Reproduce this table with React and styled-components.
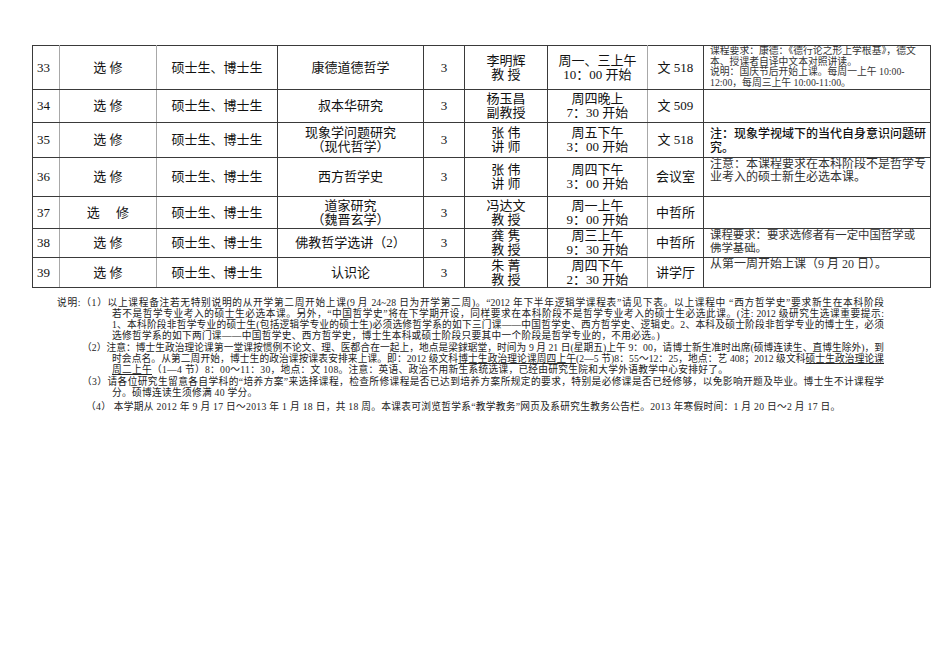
import { createGlobalStyle, styled } from 'styled-components';

const Global = createGlobalStyle`
  html, body {
    margin: 0;
    padding: 0;
    background: #fff;
  }
  body {
    font-family: "Liberation Serif", "Noto Sans CJK SC", serif;
    color: #111;
  }
`;

const Page = styled.div`
  width: 950px;
  height: 672px;
  padding: 45px 20px 0 32px;
  box-sizing: border-box;
`;

const Table = styled.table`
  width: 898px;
  border-collapse: collapse;
  table-layout: fixed;
`;

const Row = styled.tr`
  height: ${(p) => p.$h}px;
`;

const Cell = styled.td`
  border: 1px solid #3a3a3a;
  border-right-color: ${(p) => (p.$light ? '#a8a8a8' : '#3a3a3a')};
  padding: 0 2px;
  font-size: 13px;
  line-height: 14px;
  text-align: center;
  vertical-align: middle;
  white-space: nowrap;
`;

const NoCell = styled(Cell)`
  text-align: left;
  padding-left: 4px;
`;

const Remark = styled.td`
  border: 1px solid #3a3a3a;
  padding: 0 4px 0 6px;
  vertical-align: top;
  text-align: left;
  font-size: ${(p) => p.$size || 12}px;
  line-height: ${(p) => p.$lh || 14}px;
  font-weight: ${(p) => (p.$bold ? 500 : 400)};
  font-family: ${(p) =>
    p.$sans
      ? '"Noto Sans CJK SC", "Liberation Sans", sans-serif'
      : '"Liberation Serif", "Noto Sans CJK SC", serif'};
  color: ${(p) => (p.$sans ? '#111' : '#333')};
`;

const Notes = styled.div`
  margin-top: 9px;
  font-size: 9.7px;
  line-height: 11px;
  color: #222;
`;

const Para = styled.div`
  margin-bottom: ${(p) => p.$gap || 1}px;
`;

const Line = styled.div`
  box-sizing: border-box;
  width: 852px;
  padding-left: ${(p) => p.$indent}px;
  text-align: ${(p) => (p.$full ? 'justify' : 'left')};
  text-align-last: ${(p) => (p.$full ? 'justify' : 'left')};
  white-space: ${(p) => (p.$full ? 'normal' : 'nowrap')};
  letter-spacing: ${(p) => (p.$full ? 0 : 0.3)}px;
`;

const U = styled.span`
  text-decoration: underline;
`;

const rows = [
  {
    no: '33', kind: '选 修', course: ['康德道德哲学'], teacher: ['李明辉', '教 授'],
    time: ['周一、三上午', '10：00 开始'], room: '文 518', h: 44,
    remark: (
      <Remark $size={9.8} $lh={10.5}>
        课程要求：康德：《德行论之形上学根基》，德文本、授课者自译中文本对照讲读。
        <br />
        说明：国庆节后开始上课。每周一上午 10:00-12:00，每周三上午 10:00-11:00。
      </Remark>
    ),
  },
  {
    no: '34', kind: '选 修', course: ['叔本华研究'], teacher: ['杨玉昌', '副教授'],
    time: ['周四晚上', '7：30 开始'], room: '文 509', h: 33,
    remark: <Remark />,
  },
  {
    no: '35', kind: '选 修', course: ['现象学问题研究', '（现代哲学）'], teacher: ['张 伟', '讲 师'],
    time: ['周五下午', '3：00 开始'], room: '文 518', h: 35,
    remark: (
      <Remark $sans $bold $size={12} $lh={14} style={{ paddingTop: 3 }}>
        注：现象学视域下的当代自身意识问题研究。
      </Remark>
    ),
  },
  {
    no: '36', kind: '选 修', course: ['西方哲学史'], teacher: ['张 伟', '讲 师'],
    time: ['周四下午', '3：00 开始'], room: '会议室', h: 39,
    remark: (
      <Remark $size={12} $lh={13}>
        注意：本课程要求在本科阶段不是哲学专业考入的硕士新生必选本课。
      </Remark>
    ),
  },
  {
    no: '37', kind: '选　 修', course: ['道家研究', '（魏晋玄学）'], teacher: ['冯达文', '教 授'],
    time: ['周一上午', '9：00 开始'], room: '中哲所', h: 32,
    remark: <Remark />,
  },
  {
    no: '38', kind: '选 修', course: ['佛教哲学选讲（2）'], teacher: ['龚 隽', '教 授'],
    time: ['周三上午', '9：30 开始'], room: '中哲所', h: 29,
    remark: (
      <Remark $size={11.4} $lh={12.5}>
        课程要求：要求选修者有一定中国哲学或佛学基础。
      </Remark>
    ),
  },
  {
    no: '39', kind: '选 修', course: ['认识论'], teacher: ['朱 菁', '教 授'],
    time: ['周四下午', '2：30 开始'], room: '讲学厅', h: 30,
    remark: (
      <Remark $size={12} $lh={13}>
        从第一周开始上课（9 月 20 日）。
      </Remark>
    ),
  },
];

function Lines({ items }) {
  return items.map((t, i) => (
    <span key={i}>
      {i > 0 && <br />}
      {t}
    </span>
  ));
}

export default function App() {
  return (
    <Page>
      <Global />
      <Table>
        <colgroup>
          <col style={{ width: 27 }} />
          <col style={{ width: 97 }} />
          <col style={{ width: 121 }} />
          <col style={{ width: 146 }} />
          <col style={{ width: 41 }} />
          <col style={{ width: 83 }} />
          <col style={{ width: 100 }} />
          <col style={{ width: 56 }} />
          <col style={{ width: 227 }} />
        </colgroup>
        <tbody>
          {rows.map((r) => (
            <Row key={r.no} $h={r.h}>
              <NoCell $light>{r.no}</NoCell>
              <Cell $light>{r.kind}</Cell>
              <Cell>硕士生、博士生</Cell>
              <Cell>
                <Lines items={r.course} />
              </Cell>
              <Cell>3</Cell>
              <Cell>
                <Lines items={r.teacher} />
              </Cell>
              <Cell $light>
                <Lines items={r.time} />
              </Cell>
              <Cell>{r.room}</Cell>
              {r.remark}
            </Row>
          ))}
        </tbody>
      </Table>

      <Notes>
        <Para>
          <Line $full $indent={25}>
            说明:（1）以上课程备注若无特别说明的从开学第二周开始上课(9 月 24~28 日为开学第二周)。“2012 年下半年逻辑学课程表”请见下表。以上课程中 “西方哲学史”要求新生在本科阶段
          </Line>
          <Line $full $indent={80}>
            若不是哲学专业考入的硕士生必选本课。另外，“中国哲学史”将在下学期开设，同样要求在本科阶段不是哲学专业考入的硕士生必选此课。(注: 2012 级研究生选课重要提示:
          </Line>
          <Line $full $indent={80}>
            1、本科阶段非哲学专业的硕士生(包括逻辑学专业的硕士生)必须选修哲学系的如下三门课——中国哲学史、西方哲学史、逻辑史。2、本科及硕士阶段非哲学专业的博士生，必须
          </Line>
          <Line $indent={80}>
            选修哲学系的如下两门课——中国哲学史、西方哲学史，博士生本科或硕士阶段只要其中一个阶段是哲学专业的，不用必选。)
          </Line>
        </Para>
        <Para>
          <Line $full $indent={50}>
            （2）注意：博士生政治理论课第一堂课按惯例不论文、理、医都合在一起上，地点是梁銶琚堂，时间为 9 月 21 日(星期五)上午 9：00，请博士新生准时出席(硕博连读生、直博生除外)，到
          </Line>
          <Line $full $indent={80}>
            时会点名。从第二周开始，博士生的政治课按课表安排来上课。即：2012 级文科<U>博士生政治理论课周四上午</U>(2—5 节)8：55～12：25，地点：艺 408；2012 级文科<U>硕士生政治理论课</U>
          </Line>
          <Line $indent={80}>
            <U>周二上午</U>（1—4 节）8：00～11：30，地点：文 108。注意：英语、政治不用新生系统选课，已经由研究生院和大学外语教学中心安排好了。
          </Line>
        </Para>
        <Para $gap={3}>
          <Line $full $indent={50}>
            （3）请各位研究生留意各自学科的“培养方案”来选择课程，检查所修课程是否已达到培养方案所规定的要求，特别是必修课是否已经修够，以免影响开题及毕业。博士生不计课程学
          </Line>
          <Line $indent={80}>分。硕博连读生须修满 40 学分。</Line>
        </Para>
        <Para>
          <Line $indent={54}>
            （4） 本学期从 2012 年 9 月 17 日～2013 年 1 月 18 日，共 18 周。本课表可浏览哲学系“教学教务”网页及系研究生教务公告栏。2013 年寒假时间：1 月 20 日～2 月 17 日。
          </Line>
        </Para>
      </Notes>
    </Page>
  );
}
